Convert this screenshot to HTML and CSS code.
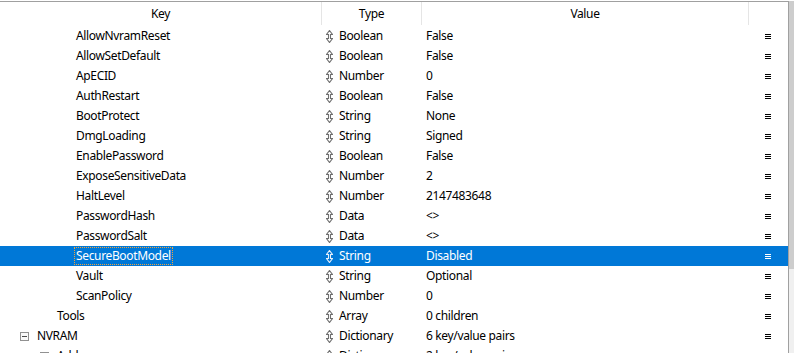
FILE: index.html
```html
<!DOCTYPE html>
<html>
<head>
<meta charset="utf-8">
<link rel="stylesheet" href="styles.css">
</head>
<body>
<div class="tree">
  <div class="main">
    <div class="header">
      <div class="hcell">Key</div>
      <div class="hcell">Type</div>
      <div class="hcell">Value</div>
      <div class="hcell last"></div>
    </div>
    <div class="rows">
      <div class="row"><div class="key d3"><span class="label">AllowNvramReset</span></div><div class="type"><svg class="updn" viewBox="0 0 7 13"><path d="M3.5 0.5 L6.5 4.5 L4.5 4.5 L4.5 8.5 L6.5 8.5 L3.5 12.5 L0.5 8.5 L2.5 8.5 L2.5 4.5 L0.5 4.5 Z"/></svg>Boolean</div><div class="value">False</div><div class="menu"><span class="ham"></span></div></div>
      <div class="row"><div class="key d3"><span class="label">AllowSetDefault</span></div><div class="type"><svg class="updn" viewBox="0 0 7 13"><path d="M3.5 0.5 L6.5 4.5 L4.5 4.5 L4.5 8.5 L6.5 8.5 L3.5 12.5 L0.5 8.5 L2.5 8.5 L2.5 4.5 L0.5 4.5 Z"/></svg>Boolean</div><div class="value">False</div><div class="menu"><span class="ham"></span></div></div>
      <div class="row"><div class="key d3"><span class="label">ApECID</span></div><div class="type"><svg class="updn" viewBox="0 0 7 13"><path d="M3.5 0.5 L6.5 4.5 L4.5 4.5 L4.5 8.5 L6.5 8.5 L3.5 12.5 L0.5 8.5 L2.5 8.5 L2.5 4.5 L0.5 4.5 Z"/></svg>Number</div><div class="value">0</div><div class="menu"><span class="ham"></span></div></div>
      <div class="row"><div class="key d3"><span class="label">AuthRestart</span></div><div class="type"><svg class="updn" viewBox="0 0 7 13"><path d="M3.5 0.5 L6.5 4.5 L4.5 4.5 L4.5 8.5 L6.5 8.5 L3.5 12.5 L0.5 8.5 L2.5 8.5 L2.5 4.5 L0.5 4.5 Z"/></svg>Boolean</div><div class="value">False</div><div class="menu"><span class="ham"></span></div></div>
      <div class="row"><div class="key d3"><span class="label">BootProtect</span></div><div class="type"><svg class="updn" viewBox="0 0 7 13"><path d="M3.5 0.5 L6.5 4.5 L4.5 4.5 L4.5 8.5 L6.5 8.5 L3.5 12.5 L0.5 8.5 L2.5 8.5 L2.5 4.5 L0.5 4.5 Z"/></svg>String</div><div class="value">None</div><div class="menu"><span class="ham"></span></div></div>
      <div class="row"><div class="key d3"><span class="label">DmgLoading</span></div><div class="type"><svg class="updn" viewBox="0 0 7 13"><path d="M3.5 0.5 L6.5 4.5 L4.5 4.5 L4.5 8.5 L6.5 8.5 L3.5 12.5 L0.5 8.5 L2.5 8.5 L2.5 4.5 L0.5 4.5 Z"/></svg>String</div><div class="value">Signed</div><div class="menu"><span class="ham"></span></div></div>
      <div class="row"><div class="key d3"><span class="label">EnablePassword</span></div><div class="type"><svg class="updn" viewBox="0 0 7 13"><path d="M3.5 0.5 L6.5 4.5 L4.5 4.5 L4.5 8.5 L6.5 8.5 L3.5 12.5 L0.5 8.5 L2.5 8.5 L2.5 4.5 L0.5 4.5 Z"/></svg>Boolean</div><div class="value">False</div><div class="menu"><span class="ham"></span></div></div>
      <div class="row"><div class="key d3"><span class="label">ExposeSensitiveData</span></div><div class="type"><svg class="updn" viewBox="0 0 7 13"><path d="M3.5 0.5 L6.5 4.5 L4.5 4.5 L4.5 8.5 L6.5 8.5 L3.5 12.5 L0.5 8.5 L2.5 8.5 L2.5 4.5 L0.5 4.5 Z"/></svg>Number</div><div class="value">2</div><div class="menu"><span class="ham"></span></div></div>
      <div class="row"><div class="key d3"><span class="label">HaltLevel</span></div><div class="type"><svg class="updn" viewBox="0 0 7 13"><path d="M3.5 0.5 L6.5 4.5 L4.5 4.5 L4.5 8.5 L6.5 8.5 L3.5 12.5 L0.5 8.5 L2.5 8.5 L2.5 4.5 L0.5 4.5 Z"/></svg>Number</div><div class="value">2147483648</div><div class="menu"><span class="ham"></span></div></div>
      <div class="row"><div class="key d3"><span class="label">PasswordHash</span></div><div class="type"><svg class="updn" viewBox="0 0 7 13"><path d="M3.5 0.5 L6.5 4.5 L4.5 4.5 L4.5 8.5 L6.5 8.5 L3.5 12.5 L0.5 8.5 L2.5 8.5 L2.5 4.5 L0.5 4.5 Z"/></svg>Data</div><div class="value">&lt;&gt;</div><div class="menu"><span class="ham"></span></div></div>
      <div class="row"><div class="key d3"><span class="label">PasswordSalt</span></div><div class="type"><svg class="updn" viewBox="0 0 7 13"><path d="M3.5 0.5 L6.5 4.5 L4.5 4.5 L4.5 8.5 L6.5 8.5 L3.5 12.5 L0.5 8.5 L2.5 8.5 L2.5 4.5 L0.5 4.5 Z"/></svg>Data</div><div class="value">&lt;&gt;</div><div class="menu"><span class="ham"></span></div></div>
      <div class="row selected"><div class="key d3"><span class="label focus">SecureBootModel</span></div><div class="type"><svg class="updn" viewBox="0 0 7 13"><path d="M3.5 0.5 L6.5 4.5 L4.5 4.5 L4.5 8.5 L6.5 8.5 L3.5 12.5 L0.5 8.5 L2.5 8.5 L2.5 4.5 L0.5 4.5 Z"/></svg>String</div><div class="value">Disabled</div><div class="menu"><span class="ham"></span></div></div>
      <div class="row"><div class="key d3"><span class="label">Vault</span></div><div class="type"><svg class="updn" viewBox="0 0 7 13"><path d="M3.5 0.5 L6.5 4.5 L4.5 4.5 L4.5 8.5 L6.5 8.5 L3.5 12.5 L0.5 8.5 L2.5 8.5 L2.5 4.5 L0.5 4.5 Z"/></svg>String</div><div class="value">Optional</div><div class="menu"><span class="ham"></span></div></div>
      <div class="row"><div class="key d3"><span class="label">ScanPolicy</span></div><div class="type"><svg class="updn" viewBox="0 0 7 13"><path d="M3.5 0.5 L6.5 4.5 L4.5 4.5 L4.5 8.5 L6.5 8.5 L3.5 12.5 L0.5 8.5 L2.5 8.5 L2.5 4.5 L0.5 4.5 Z"/></svg>Number</div><div class="value">0</div><div class="menu"><span class="ham"></span></div></div>
      <div class="row"><div class="key d2"><span class="label">Tools</span></div><div class="type"><svg class="updn" viewBox="0 0 7 13"><path d="M3.5 0.5 L6.5 4.5 L4.5 4.5 L4.5 8.5 L6.5 8.5 L3.5 12.5 L0.5 8.5 L2.5 8.5 L2.5 4.5 L0.5 4.5 Z"/></svg>Array</div><div class="value">0 children</div><div class="menu"><span class="ham"></span></div></div>
      <div class="row"><div class="key d1"><span class="toggle"></span><span class="label">NVRAM</span></div><div class="type"><svg class="updn" viewBox="0 0 7 13"><path d="M3.5 0.5 L6.5 4.5 L4.5 4.5 L4.5 8.5 L6.5 8.5 L3.5 12.5 L0.5 8.5 L2.5 8.5 L2.5 4.5 L0.5 4.5 Z"/></svg>Dictionary</div><div class="value">6 key/value pairs</div><div class="menu"><span class="ham"></span></div></div>
      <div class="row"><div class="key d2t"><span class="toggle"></span><span class="label">Add</span></div><div class="type"><svg class="updn" viewBox="0 0 7 13"><path d="M3.5 0.5 L6.5 4.5 L4.5 4.5 L4.5 8.5 L6.5 8.5 L3.5 12.5 L0.5 8.5 L2.5 8.5 L2.5 4.5 L0.5 4.5 Z"/></svg>Dictionary</div><div class="value">2 key/value pairs</div><div class="menu"><span class="ham"></span></div></div>
    </div>
  </div>
  <div class="scrollbar"><div class="thumb"></div></div>
</div>
</body>
</html>
```
FILE: styles.css
```css
html, body {
  margin: 0;
  padding: 0;
  background: #ffffff;
}
body {
  font-family: "Noto Sans", "Open Sans", sans-serif;
  font-size: 12px;
  letter-spacing: -0.35px;
  color: #000000;
}
.tree {
  width: 794px;
  height: 353px;
  overflow: hidden;
  display: flex;
  border-top: 1px solid #ffffff;
}
.main {
  width: 788px;
  border-top: 1px solid #a0a0a0;
  border-right: 1px solid #a0a0a0;
  display: flex;
  flex-direction: column;
}
.header {
  display: grid;
  grid-template-columns: 321px 100px 327px 40px;
  height: 24px;
}
.hcell {
  display: flex;
  align-items: center;
  justify-content: center;
  border-left: 1px solid #e5e5e5;
  margin-bottom: 1px;
  line-height: 23px;
}
.hcell:first-child {
  border-left: none;
}
.rows {
  display: flex;
  flex-direction: column;
}
.row {
  display: grid;
  grid-template-columns: 321px 100px 327px 40px;
  height: 20px;
  align-items: center;
  line-height: 16px;
}
.row.selected {
  background: #0078d7;
  color: #ffffff;
}
.key {
  display: flex;
  align-items: center;
  white-space: nowrap;
}
.key.d3 { padding-left: 74px; }
.key.d2 { padding-left: 55px; }
.key.d1 { padding-left: 20px; }
.key.d2t { padding-left: 40px; }
.label {
  padding: 0 1px;
  border: 1px dotted transparent;
}
.label.focus {
  border-color: #f3a33b;
}
.toggle {
  width: 7px;
  height: 7px;
  border: 1px solid #919191;
  margin-right: 6px;
  position: relative;
  background: #fafafa;
}
.toggle::after {
  content: "";
  position: absolute;
  left: 1px;
  top: 3px;
  width: 5px;
  height: 1px;
  background: #4d4d4d;
}
.type {
  display: flex;
  align-items: center;
  padding-left: 5px;
  white-space: nowrap;
}
.updn {
  width: 7px;
  height: 13px;
  margin-right: 6px;
  fill: none;
  stroke: #6e6e6e;
  stroke-width: 1.1;
}
.selected .updn {
  stroke: #e8f0fa;
}
.value {
  padding-left: 5px;
  white-space: nowrap;
}
.menu {
  display: flex;
  align-items: center;
  padding-left: 17px;
}
.ham {
  width: 6px;
  height: 5px;
  background:
    linear-gradient(#000 0 1px, transparent 1px 2px, #000 2px 3px, transparent 3px 4px, #000 4px 5px);
}
.selected .ham {
  background:
    linear-gradient(#fff 0 1px, transparent 1px 2px, #fff 2px 3px, transparent 3px 4px, #fff 4px 5px);
}
.scrollbar {
  width: 5px;
  background: #f0f0f0;
  display: flex;
  flex-direction: column;
}
.thumb {
  height: 268px;
  background: #cdcdcd;
}
```
